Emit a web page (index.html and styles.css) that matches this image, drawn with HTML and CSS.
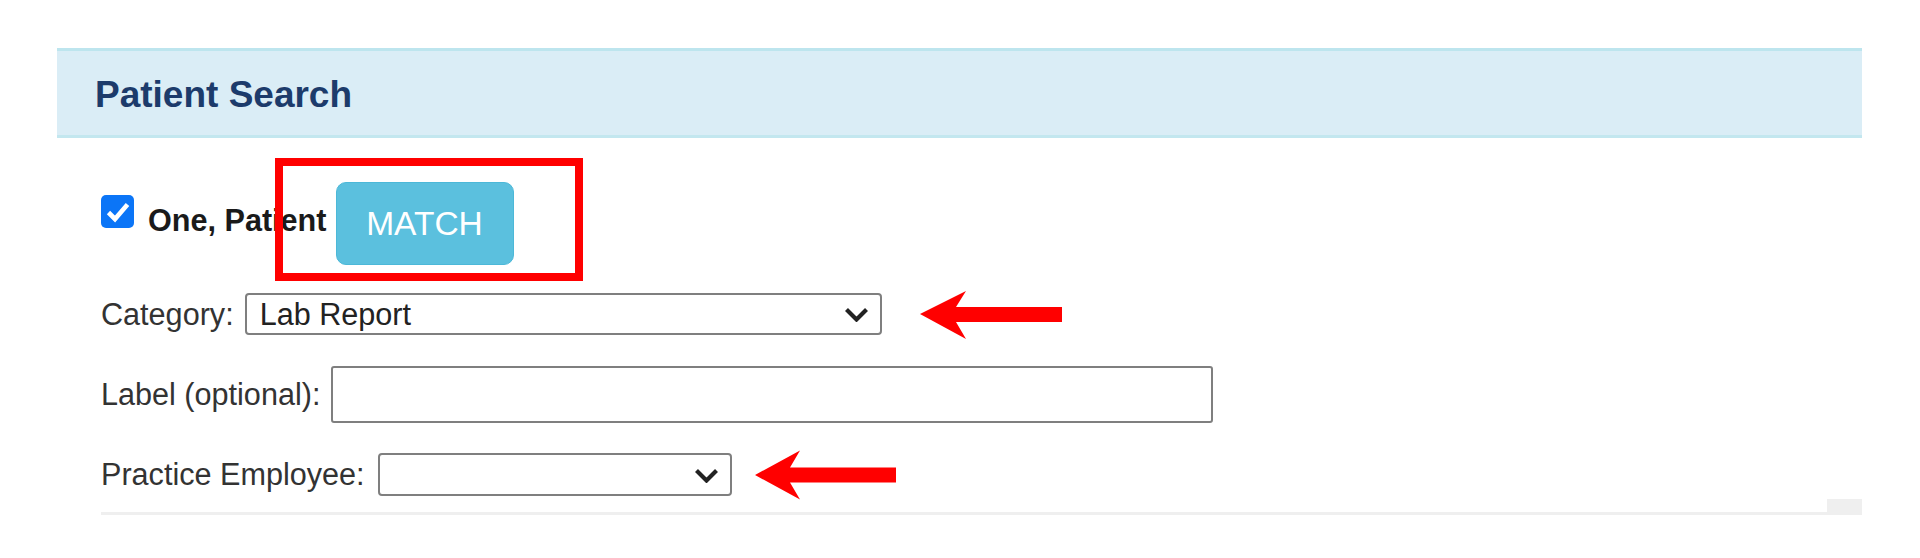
FILE: index.html
```html
<!DOCTYPE html>
<html lang="en">
<head>
<meta charset="utf-8">
<title>Patient Search</title>
<link rel="stylesheet" href="styles.css">
</head>
<body>
<div class="page">
  <div class="panel">
    <div class="panel-heading"><h3 class="panel-title">Patient Search</h3></div>
    <div class="panel-body">
      <div class="check-row">
        <svg class="checkbox" viewBox="0 0 33 33" aria-hidden="true">
          <rect x="0" y="0" width="33" height="33" rx="5" fill="#0b75f7"/>
          <polyline points="7.5,17.5 14,24 26.5,9.5" fill="none" stroke="#fff" stroke-width="4.6" stroke-linejoin="miter" stroke-linecap="butt"/>
        </svg>
        <span class="patient-name">One, Patient</span>
        <button class="btn-match" type="button">MATCH</button>
      </div>

      <div class="field-row category-row">
        <label class="field-label">Category:</label>
        <div class="select-wrap select-category">
          <select class="select"><option>Lab Report</option></select>
          <svg class="chevron" viewBox="0 0 25 15" aria-hidden="true"><polyline points="2.5,2.5 12.5,12.5 22.5,2.5" fill="none" stroke="#222" stroke-width="4.2"/></svg>
        </div>
      </div>

      <div class="field-row label-row">
        <label class="field-label">Label (optional):</label>
        <input class="text-input" type="text">
      </div>

      <div class="field-row practice-row">
        <label class="field-label field-label-wide">Practice Employee:</label>
        <div class="select-wrap select-practice">
          <select class="select"><option></option></select>
          <svg class="chevron" viewBox="0 0 25 15" aria-hidden="true"><polyline points="2.5,2.5 12.5,12.5 22.5,2.5" fill="none" stroke="#222" stroke-width="4.2"/></svg>
        </div>
      </div>

      <div class="footer-row">
        <div class="rule"></div>
        <div class="corner"></div>
      </div>
    </div>
  </div>

  <div class="annot-box"></div>
  <svg class="annot-arrows" viewBox="0 0 1920 558" aria-hidden="true">
    <polygon points="920,314 966,291 956,307 1062,307 1062,322 956,322 966,339" fill="#ff0000"/>
    <polygon points="755,475 800,450.5 790,467.5 896,467.5 896,482.5 790,482.5 800,499.5" fill="#ff0000"/>
  </svg>
</div>
</body>
</html>
```

FILE: styles.css
```css
html, body {
  margin: 0;
  padding: 0;
  background: #ffffff;
}

body {
  font-family: "Liberation Sans", Arial, sans-serif;
  color: #333333;
}

.page {
  position: relative;
  width: 1920px;
  height: 558px;
  overflow: hidden;
  box-sizing: border-box;
  padding: 48px 58px 0 57px;
}

.panel-heading {
  height: 90px;
  box-sizing: border-box;
  background: #daedf6;
  border-top: 3px solid #bde5ee;
  border-bottom: 3px solid #c3e7ef;
  padding: 2px 0 0 38px;
  display: flex;
  align-items: center;
}

.panel-title {
  margin: 0;
  font-size: 37px;
  line-height: 37px;
  font-weight: bold;
  color: #1c3b6b;
}

.panel-body {
  padding-left: 44px;
}

.check-row {
  margin-top: 44px;
  display: flex;
  align-items: flex-start;
  height: 83px;
}

.checkbox {
  width: 33px;
  height: 33px;
  margin-top: 13px;
  margin-right: 14px;
  flex: none;
}

.patient-name {
  font-size: 30.6px;
  line-height: 35px;
  font-weight: bold;
  color: #1a1a1a;
  margin-top: 21px;
  margin-right: 9px;
}

.btn-match {
  width: 178px;
  height: 83px;
  box-sizing: border-box;
  padding: 0;
  background: #5bc0de;
  border: 1.5px solid #4cb8d8;
  border-radius: 10px;
  color: #ffffff;
  font-family: "Liberation Sans", Arial, sans-serif;
  font-size: 33.5px;
  line-height: 34px;
  display: flex;
  align-items: center;
  justify-content: center;
}

.field-row {
  display: flex;
  align-items: center;
}

.field-label {
  font-size: 30.6px;
  line-height: 35px;
  color: #333333;
  margin-right: 11px;
}

.field-label-wide {
  margin-right: 13px;
}

.category-row {
  margin-top: 28px;
}

.label-row {
  margin-top: 31px;
}

.practice-row {
  margin-top: 30px;
}

.select-wrap {
  position: relative;
  box-sizing: border-box;
}

.select-category {
  width: 637px;
  height: 42px;
}

.select-practice {
  width: 354px;
  height: 43px;
}

.select {
  -webkit-appearance: none;
  appearance: none;
  width: 100%;
  height: 100%;
  box-sizing: border-box;
  margin: 0;
  border: 2px solid #7f7f7f;
  border-radius: 4px;
  background: #ffffff;
  font-family: "Liberation Sans", Arial, sans-serif;
  font-size: 30.6px;
  color: #222222;
  padding: 0 0 0 13px;
  outline: none;
}

.chevron {
  position: absolute;
  right: 13px;
  top: 50%;
  width: 25px;
  height: 15px;
  margin-top: -7px;
  pointer-events: none;
}

.text-input {
  width: 882px;
  height: 57px;
  box-sizing: border-box;
  margin: 0;
  border: 2px solid #7f7f7f;
  border-radius: 3px;
  background: #ffffff;
  font-family: "Liberation Sans", Arial, sans-serif;
  font-size: 30.6px;
  padding: 0 10px;
}

.footer-row {
  margin-top: 3px;
  height: 16px;
  display: flex;
  align-items: flex-end;
}

.rule {
  flex: 1;
  height: 3px;
  background: #efefef;
}

.corner {
  width: 35px;
  height: 16px;
  background: #efefef;
}

.annot-box {
  position: absolute;
  left: 275px;
  top: 158px;
  width: 308px;
  height: 123px;
  box-sizing: border-box;
  border: 8px solid #ff0000;
  pointer-events: none;
}

.annot-arrows {
  position: absolute;
  left: 0;
  top: 0;
  width: 1920px;
  height: 558px;
  pointer-events: none;
}
```
